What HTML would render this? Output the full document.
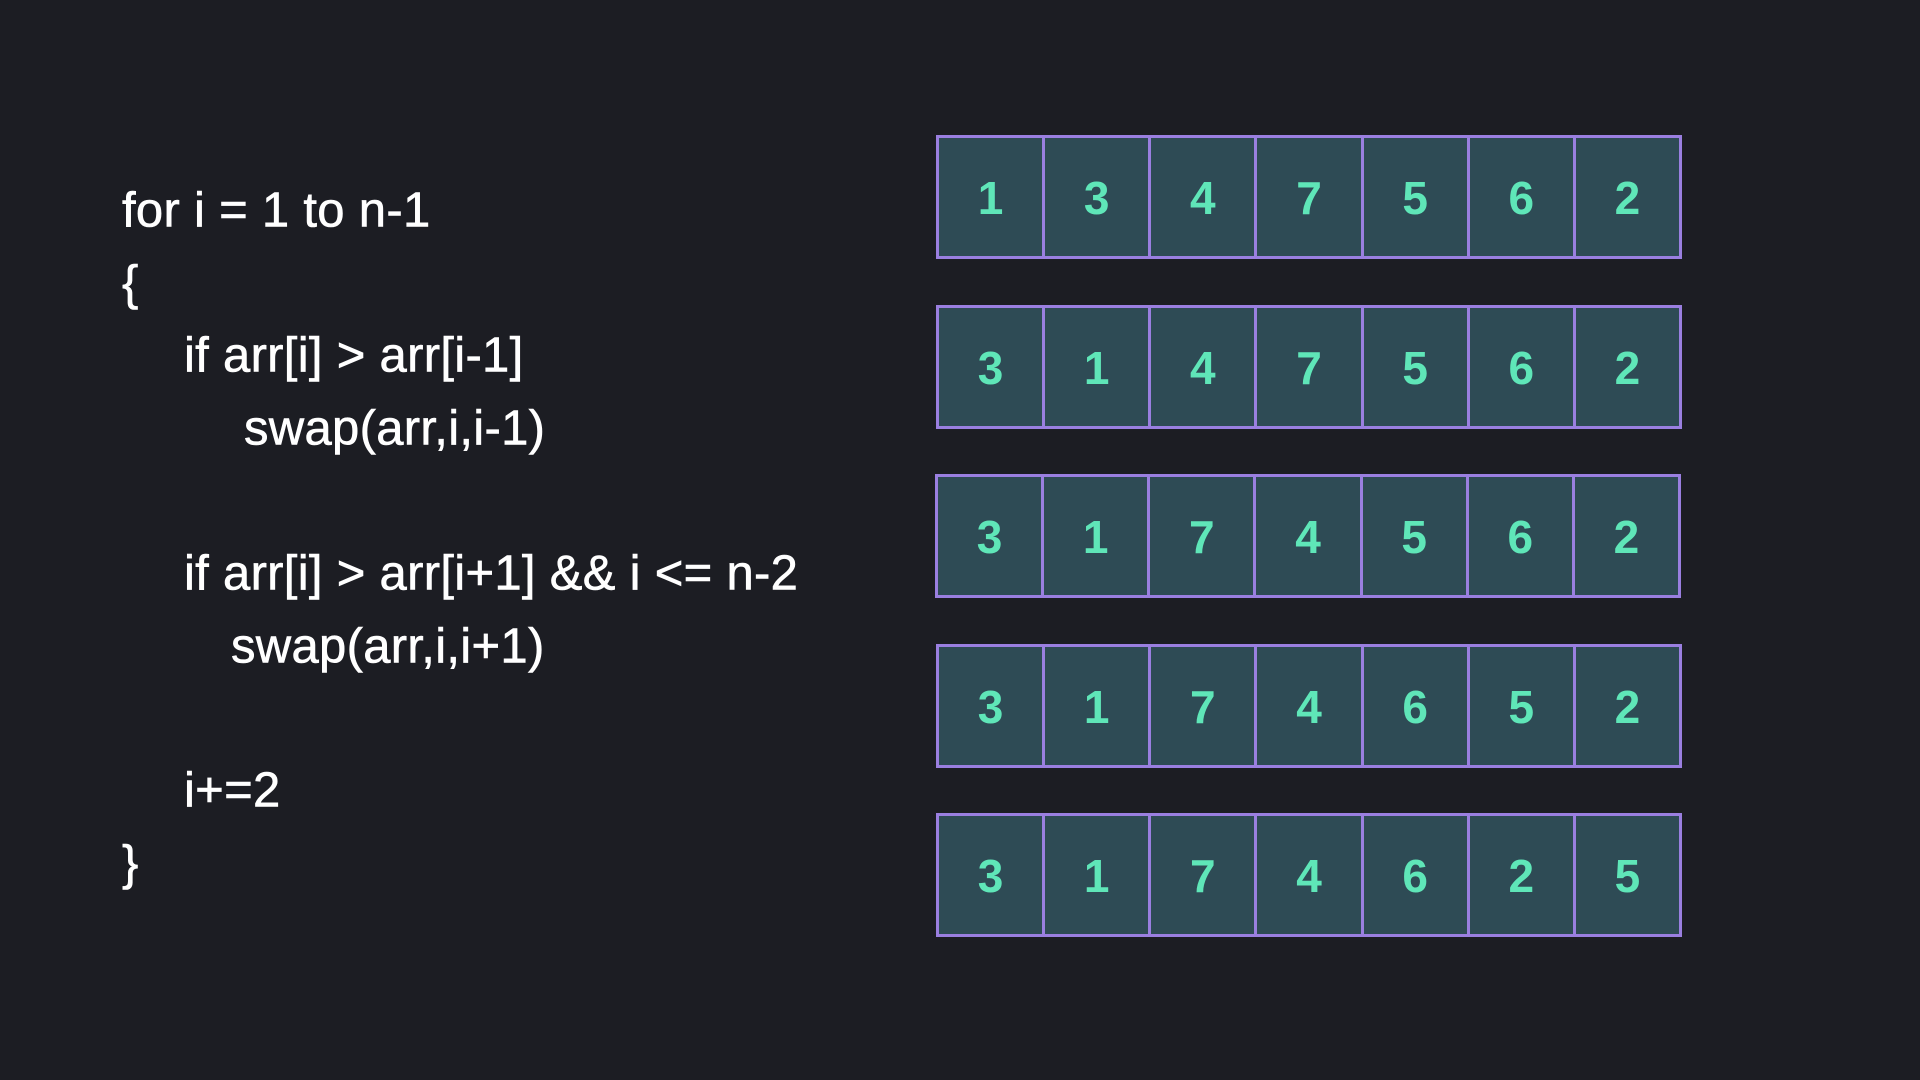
<!DOCTYPE html>
<html><head><style>
body{margin:0;width:1920px;height:1080px;background:#1c1d23;overflow:hidden;position:relative;font-family:"Liberation Sans",sans-serif}
.c{position:absolute;color:#fff;font-size:49px;letter-spacing:0.3px;line-height:1;white-space:pre;transform:translateY(-50%);-webkit-text-stroke:0.6px #fff}
.row{position:absolute;left:936px;width:746px;height:124px;display:flex;border:3px solid #9a7fe0;background:#2e4b55;box-sizing:border-box}
.row div{flex:1;border-right:3px solid #9a7fe0;display:flex;align-items:center;justify-content:center;color:#5fe6b8;font-weight:bold;font-size:46px;padding-top:2px}
.row div:last-child{border-right:none}
</style></head><body>
<div class="c" style="left:122px;top:211px">for i = 1 to n-1</div>
<div class="c" style="left:122px;top:284px">{</div>
<div class="c" style="left:184px;top:356px">if arr[i] &gt; arr[i-1]</div>
<div class="c" style="left:244px;top:429px">swap(arr,i,i-1)</div>
<div class="c" style="left:184px;top:574px">if arr[i] &gt; arr[i+1] &amp;&amp; i &lt;= n-2</div>
<div class="c" style="left:231px;top:647px">swap(arr,i,i+1)</div>
<div class="c" style="left:184px;top:791px">i+=2</div>
<div class="c" style="left:122px;top:864px">}</div>
<div class="row" style="top:135px"><div>1</div><div>3</div><div>4</div><div>7</div><div>5</div><div>6</div><div>2</div></div>
<div class="row" style="top:305px"><div>3</div><div>1</div><div>4</div><div>7</div><div>5</div><div>6</div><div>2</div></div>
<div class="row" style="top:474px;left:935px"><div>3</div><div>1</div><div>7</div><div>4</div><div>5</div><div>6</div><div>2</div></div>
<div class="row" style="top:644px"><div>3</div><div>1</div><div>7</div><div>4</div><div>6</div><div>5</div><div>2</div></div>
<div class="row" style="top:813px"><div>3</div><div>1</div><div>7</div><div>4</div><div>6</div><div>2</div><div>5</div></div>
</body></html>
